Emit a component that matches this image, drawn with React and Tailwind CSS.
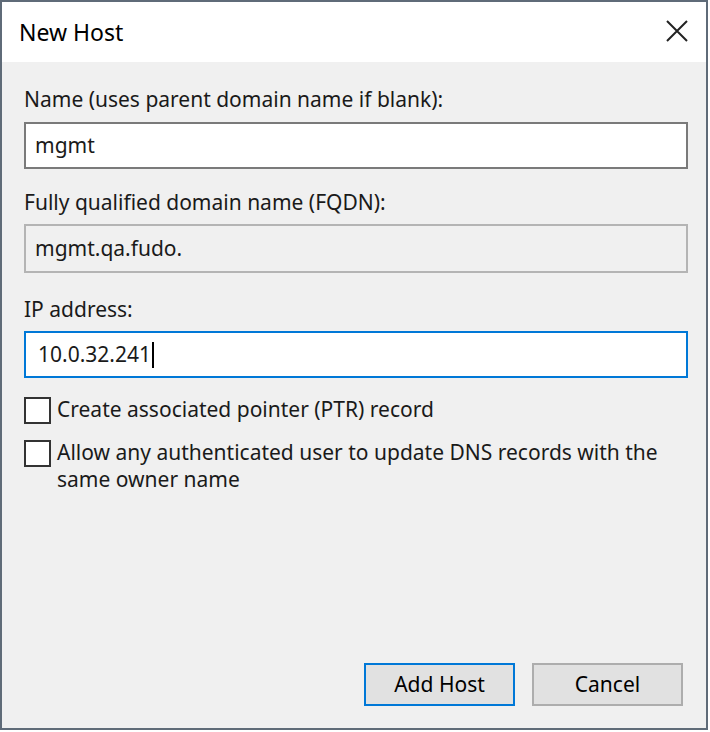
import React from "react";

const font = { fontFamily: '"Segoe UI", "Noto Sans", "Open Sans", sans-serif' };

function Checkbox({ children }) {
  return (
    <label className="flex items-start gap-[6px]">
      <span className="mt-[1px] h-[27px] w-[27px] shrink-0 border-2 border-[#333333] bg-white" />
      <span className="leading-[27px]">{children}</span>
    </label>
  );
}

export default function App() {
  return (
    <div className="h-[732px] w-[710px] bg-white text-[#1a1a1a]" style={font}>
      <div className="flex h-[730px] w-[708px] flex-col border-2 border-[#5f6b78] bg-[#f0f0f0]">
        {/* title bar */}
        <div className="flex h-[60px] shrink-0 items-center justify-between bg-white pl-[17px] pr-[18px]">
          <span className="text-[23px] text-black">New Host</span>
          <svg width="22" height="22" viewBox="0 0 22 22" className="mb-[2px]">
            <path d="M1 1L21 21M21 1L1 21" stroke="#222" strokeWidth="2" fill="none" />
          </svg>
        </div>

        <div className="flex flex-1 flex-col px-[22px] pt-[24px] text-[21px]">
          <div className="leading-[26px]">Name (uses parent domain name if blank):</div>
          <div className="mt-[10px] flex h-[47px] w-[664px] items-center border-2 border-[#7a7a7a] bg-white px-[9px]">
            mgmt
          </div>

          <div className="mt-[20px] leading-[26px]">Fully qualified domain name (FQDN):</div>
          <div className="mt-[9px] flex h-[49px] w-[664px] items-center border-2 border-[#b4b4b4] bg-[#f0f0f0] px-[9px]">
            mgmt.qa.fudo.
          </div>

          <div className="mt-[23px] leading-[26px]">IP address:</div>
          <div className="mt-[9px] flex h-[47px] w-[664px] items-center border-2 border-[#0078d7] bg-white px-[12px]">
            10.0.32.241
            <span className="ml-[1px] h-[26px] w-[2px] bg-black" />
          </div>

          <div className="mt-[18px] flex flex-col gap-[15px]">
            <Checkbox>Create associated pointer (PTR) record</Checkbox>
            <Checkbox>
              Allow any authenticated user to update DNS records with the
              <br />
              same owner name
            </Checkbox>
          </div>

          <div className="mt-auto mb-[22px] flex justify-end gap-[17px] mr-[1px]">
            <button className="h-[43px] w-[151px] border-2 border-[#0078d7] bg-[#e1e1e1] text-[21px] text-black">
              Add Host
            </button>
            <button className="h-[43px] w-[151px] border-2 border-[#adadad] bg-[#e1e1e1] text-[21px] text-black">
              Cancel
            </button>
          </div>
        </div>
      </div>
    </div>
  );
}
